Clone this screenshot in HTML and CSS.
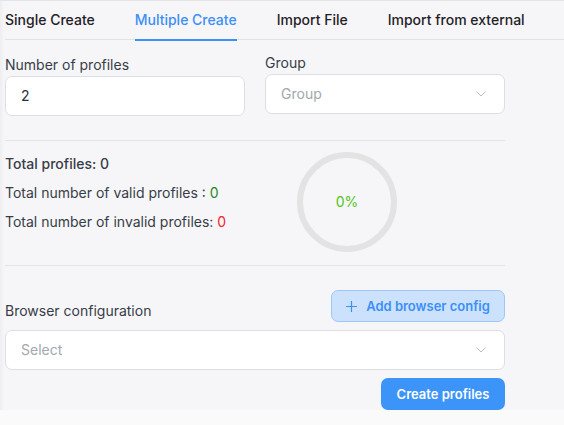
FILE: index.html
```html
<!DOCTYPE html>
<html lang="en">
<head>
<meta charset="utf-8">
<title>Create profiles</title>
<link rel="stylesheet" href="styles.css">
</head>
<body>
<div class="panel">
  <nav class="tabs">
    <div class="tab">Single Create</div>
    <div class="tab active">Multiple Create</div>
    <div class="tab">Import File</div>
    <div class="tab">Import from external</div>
  </nav>
  <div class="content">
    <div class="row-fields">
      <div class="field field-left">
        <label class="label">Number of profiles</label>
        <div class="input">2</div>
      </div>
      <div class="field">
        <label class="label">Group</label>
        <div class="input select">
          <span class="placeholder">Group</span>
          <svg class="chev" width="10" height="6" viewBox="0 0 10 6"><path d="M0.5 0.5 L5 5 L9.5 0.5" fill="none" stroke="#b8bcc3" stroke-width="1"/></svg>
        </div>
      </div>
    </div>
    <div class="divider"></div>
    <div class="stats">
      <div class="stat-text">
        <div class="stat-line strong">Total profiles: <span class="num">0</span></div>
        <div class="stat-line">Total number of valid profiles : <span class="valid">0</span></div>
        <div class="stat-line">Total number of invalid profiles: <span class="invalid">0</span></div>
      </div>
      <div class="ring">
        <span class="ring-text">0%</span>
      </div>
    </div>
    <div class="divider"></div>
    <div class="config-head">
      <label class="label">Browser configuration</label>
      <button class="btn-light"><svg class="plus" width="11" height="11" viewBox="0 0 11 11"><path d="M5.5 0 V11 M0 5.5 H11" stroke="#3b8ff7" stroke-width="1.2" fill="none"/></svg>Add browser config</button>
    </div>
    <div class="input select wide">
      <span class="placeholder">Select</span>
      <svg class="chev" width="10" height="6" viewBox="0 0 10 6"><path d="M0.5 0.5 L5 5 L9.5 0.5" fill="none" stroke="#b8bcc3" stroke-width="1"/></svg>
    </div>
    <div class="actions">
      <button class="btn-primary">Create profiles</button>
    </div>
  </div>
</div>
</body>
</html>
```
FILE: styles.css
```css
html, body {
  margin: 0;
  padding: 0;
  background: #fafafb;
  font-family: Inter, "Noto Sans", sans-serif;
  font-size: 14px;
  line-height: 22px;
}
.panel {
  background: #f6f6f8;
  border-top: 1px solid #e2e4e8;
  height: 409px;
  box-shadow: inset 4px 0 4px -3px rgba(0,0,0,0.05);
}
.tabs {
  display: flex;
  gap: 40px;
  margin-left: 5px;
  border-bottom: 1px solid #dfe2e8;
}
.tab {
  position: relative;
  padding: 8px 0 8px;
  color: #1f2126;
  font-weight: 500;
}
.tab.active {
  color: #3b8ff7;
}
.tab.active::after {
  content: "";
  position: absolute;
  left: 0;
  right: 0;
  bottom: -2px;
  height: 2px;
  background: #3b8ff7;
}
.content {
  width: 500px;
  margin-left: 5px;
  padding-top: 12px;
}
.row-fields {
  display: flex;
  gap: 20px;
}
.field {
  width: 240px;
  display: flex;
  flex-direction: column;
}
.field-left {
  padding-top: 2px;
}
.label {
  color: #373d47;
  font-weight: 400;
}
.input {
  box-sizing: border-box;
  height: 40px;
  background: #fff;
  border: 1px solid #dcdfe6;
  border-radius: 7px;
  padding: 0 15px;
  display: flex;
  align-items: center;
  color: #2b2f36;
}
.select {
  justify-content: space-between;
}
.placeholder {
  color: #a3a7ae;
}
.chev {
  margin-right: 3px;
}
.divider {
  height: 1px;
  background: #e1e3e8;
}
.row-fields + .divider {
  margin-top: 24px;
}
.stats {
  display: flex;
  align-items: flex-start;
  padding: 11px 0 13px;
}
.stat-text {
  width: 292px;
  padding-top: 1px;
  display: flex;
  flex-direction: column;
  gap: 7px;
  color: #373d47;
}
.stat-line.strong {
  font-weight: 500;
}
.valid {
  color: #1f8a1f;
}
.invalid {
  color: #f5222d;
}
.ring {
  box-sizing: border-box;
  width: 100px;
  height: 100px;
  border-radius: 50%;
  border: 6px solid #e3e3e3;
  display: flex;
  align-items: center;
  justify-content: center;
}
.ring-text {
  color: #52c41a;
  font-size: 14px;
}
.config-head {
  margin-top: 24px;
  display: flex;
  justify-content: space-between;
  align-items: flex-end;
  margin-bottom: 8px;
}
.btn-light {
  box-sizing: border-box;
  height: 32px;
  width: 174px;
  background: #cce2fc;
  border: 1px solid #9dc7f8;
  border-radius: 7px;
  color: #3b8ff7;
  font-family: inherit;
  font-size: 13px;
  font-weight: 600;
  display: flex;
  align-items: center;
  justify-content: center;
  gap: 9px;
  padding: 0;
}
.wide {
  width: 500px;
}
.actions {
  display: flex;
  justify-content: flex-end;
  margin-top: 8px;
}
.btn-primary {
  box-sizing: border-box;
  height: 32px;
  width: 124px;
  background: #3c94f9;
  border: none;
  border-radius: 7px;
  color: #fff;
  font-family: inherit;
  font-size: 13px;
  font-weight: 600;
  padding: 0;
}
```
